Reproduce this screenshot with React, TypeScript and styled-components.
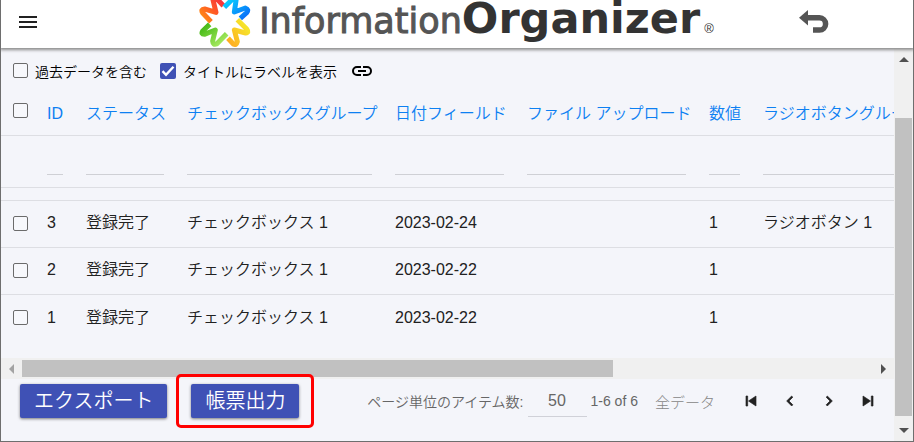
import React from "react";
import styled, { createGlobalStyle } from "styled-components";

const GlobalStyle = createGlobalStyle`
  * { box-sizing: border-box; }
  body {
    margin: 0;
    background: #f4f5fa;
    color: #212121;
    font-family: "Liberation Sans", "Noto Sans CJK JP", sans-serif;
    font-size: 16px;
    font-weight: 350;
  }
`;

const Page = styled.div`
  display: flex;
  flex-direction: column;
  height: 100vh;
  border: solid #6e6e6e;
  border-width: 0 1px 1px;
  overflow: hidden;
`;

const Header = styled.header`
  display: grid;
  grid-template-columns: 1fr auto 1fr;
  grid-template-rows: 44px;
  align-items: center;
  flex: none;
  height: 48px;
  padding: 0 84px 0 16px;
  background: #fff;
  box-shadow: 0 1px 3px 1px #8a8a8a;
  z-index: 1;
`;

const IconButton = styled.button`
  display: flex;
  align-items: center;
  justify-content: center;
  padding: 0;
  border: 0;
  background: none;
  color: #212121;
  cursor: pointer;
`;

const MenuButton = styled(IconButton)`
  justify-self: start;
`;

const BackButton = styled(IconButton)`
  justify-self: end;
`;

const Brand = styled.div`
  display: flex;
  align-items: center;
  align-self: start;
  gap: 8px;
  height: 47px;
  margin-left: 67px;
`;

const BrandName = styled.div`
  display: flex;
  align-items: baseline;
  font-family: "DejaVu Sans", sans-serif;
  font-weight: 400;
  line-height: 46px;
  white-space: nowrap;
`;

const Light = styled.span`
  color: #555;
  font-size: 35px;
  -webkit-text-stroke: 1px #555;
`;

const Heavy = styled.span`
  color: #333;
  font-size: 43px;
  font-weight: 700;
`;

const Registered = styled.span`
  margin-left: 4px;
  color: #333;
  font-family: "Liberation Sans", sans-serif;
  font-size: 13px;
`;

const Body = styled.div`
  display: flex;
  flex: 1;
  min-height: 0;
`;

const Main = styled.main`
  display: flex;
  flex-direction: column;
  flex: 1;
  min-width: 0;
`;

const Options = styled.div`
  display: flex;
  align-items: center;
  flex: none;
  gap: 13px;
  height: 42px;
  padding: 3px 12px 0;
  color: #000;
  font-size: 14px;
`;

const Option = styled.label`
  display: flex;
  align-items: center;
  gap: 7px;
  white-space: nowrap;
`;

const Check = styled.input`
  appearance: none;
  display: block;
  flex: none;
  width: 15px;
  height: 15px;
  margin: 0;
  border: 1px solid #6b6b6b;
  border-radius: 2px;
  background: #f7f8fc;

  &:checked {
    width: 16px;
    height: 16px;
    border: 0;
    background: #3f51b5;
  }
`;

const CheckHolder = styled.span`
  display: grid;
  & > * { grid-area: 1 / 1; }
  & > svg { pointer-events: none; }
`;

const TableArea = styled.div`
  flex: 1;
  min-height: 0;
  overflow: hidden;
`;

const Table = styled.table`
  width: 1051px;
  table-layout: fixed;
  border-collapse: separate;
  border-spacing: 0;
  white-space: nowrap;

  th, td {
    padding: 0 12px 0 11px;
    text-align: left;
    font-weight: inherit;
    line-height: 20px;
  }
  th:first-child, td:first-child { padding-left: 12px; }
`;

const Col = styled.col<{ $w: number }>`
  width: ${(p) => p.$w}px;
`;

const HeadRow = styled.tr`
  height: 46px;
  color: #0d80f2;
  th { padding-top: 3px; border-bottom: 1px solid #dddee3; }
  th:first-child { padding-top: 0; padding-bottom: 4px; }
`;

const FilterRow = styled.tr`
  height: 52px;
  td {
    border-bottom: 1px solid #dddee3;
    vertical-align: top;
  }
`;

const SpacerRow = styled.tr`
  height: 13px;
  td { border-bottom: 1px solid #dddee3; }
`;

const DataRow = styled.tr`
  height: 47px;
  &:not(:last-child) td { border-bottom: 1px solid #dddee3; }
  td { padding-bottom: 2px; }
`;

const FilterInput = styled.input`
  display: block;
  width: 100%;
  height: 39px;
  padding: 0;
  border: 0;
  border-bottom: 1px solid #cfd0d5;
  background: transparent;
  font: inherit;
  outline: 0;
`;

const VTrack = styled.div`
  display: flex;
  flex-direction: column;
  flex: none;
  align-items: center;
  width: 19px;
  padding: 9px 0 8px;
  background: #f0f0f0;
`;

const VThumb = styled.div`
  flex: 1;
  width: 17px;
  margin: 56px 0 12px;
  background: #c1c1c1;
`;

const HTrack = styled.div`
  display: flex;
  align-items: center;
  flex: none;
  height: 21px;
  padding: 0 8px;
  background: #f0f0f0;
`;

const HRail = styled.div`
  flex: 1;
  margin: 0 7px 0 8px;
`;

const HThumb = styled.div`
  width: 69.4%;
  height: 17px;
  background: #c1c1c1;
`;

const Footer = styled.footer`
  display: flex;
  align-items: center;
  flex: none;
  height: 62px;
  padding: 0 16px 18px 19px;
`;

const ActionButton = styled.button`
  flex: none;
  height: 34px;
  padding: 0 14px;
  border: 0;
  border-radius: 2px;
  background: #3f51b5;
  box-shadow: 0 1px 3px rgba(0, 0, 0, 0.5);
  color: #fff;
  font: inherit;
  font-size: 20px;
  line-height: 30px;
  white-space: nowrap;
  cursor: pointer;
`;

const Highlight = styled.div`
  flex: none;
  margin: 0 auto 0 9px;
  padding: 7px 12px;
  border: 3px solid #f00;
  border-radius: 5px;
`;

const Pager = styled.div`
  display: flex;
  align-items: center;
  flex: none;
  color: #666;
  font-size: 14px;
  white-space: nowrap;
`;

const PageSizeLabel = styled.label`
  display: flex;
  align-items: center;
  gap: 4px;
`;

const PageSize = styled.input`
  width: 59px;
  height: 32px;
  padding: 0;
  border: 0;
  border-bottom: 1px solid #d0d1d8;
  background: transparent;
  color: inherit;
  font: inherit;
  font-size: 16px;
  text-align: center;
`;

const Range = styled.span`
  margin: 0 17px 0 4px;
`;

const AllData = styled.button`
  margin-right: 26px;
  padding: 0;
  border: 0;
  background: none;
  color: #868686;
  font: inherit;
  font-weight: 300;
  font-size: 15px;
`;

const PagerButtons = styled.div`
  display: flex;
  gap: 19px;
`;

type CheckboxProps = { label?: string; checked?: boolean };

function Checkbox({ label, checked = false }: CheckboxProps) {
  return (
    <CheckHolder>
      <Check type="checkbox" defaultChecked={checked} aria-label={label} />
      {checked && (
        <svg width="16" height="16" viewBox="0 0 16 16" fill="none" stroke="#fff" strokeWidth="2.4">
          <path d="M2.5 8.2 6 11.8 13.5 3.8" />
        </svg>
      )}
    </CheckHolder>
  );
}

function Emblem() {
  return (
    <svg width="52" height="48" viewBox="0 0 156 144" aria-hidden="true">
      <defs>
        <linearGradient id="red" x1="1" y1="0" x2="0" y2="1">
          <stop offset="0.1" stopColor="#f5333f" />
          <stop offset="0.5" stopColor="#ff5a24" />
          <stop offset="1" stopColor="#ff9310" />
        </linearGradient>
        <linearGradient id="blue" x1="0" y1="0" x2="1" y2="1">
          <stop offset="0.1" stopColor="#09d2ff" />
          <stop offset="1" stopColor="#0868f8" />
        </linearGradient>
        <linearGradient id="green" x1="0" y1="0" x2="1" y2="1">
          <stop offset="0" stopColor="#3cb50f" />
          <stop offset="1" stopColor="#b4f06a" />
        </linearGradient>
        <linearGradient id="yellow" x1="1" y1="0" x2="0" y2="1">
          <stop offset="0.2" stopColor="#f6e32b" />
          <stop offset="1" stopColor="#ffa81f" />
        </linearGradient>
      </defs>
      <g fill="none" strokeWidth="15" strokeLinejoin="round">
        <path stroke="url(#red)" d="M36 65 L11 39 Q4 28 17 27 L51 37 L42 0 Q42 -10 52 -5 L73 17" />
        <path stroke="url(#blue)" d="M76 22 L103 -5 Q112 -8 111 2 L106 36 L139 24 Q151 28 143 38 L124 55" />
        <path stroke="url(#green)" d="M32 73 L11 93 Q5 103 16 103 L49 90 L41 123 Q42 136 53 132 L83 101" />
        <path stroke="url(#yellow)" d="M115 59 L143 87 Q151 98 140 99 L106 90 L115 125 Q112 137 103 132 L87 115" />
      </g>
    </svg>
  );
}

const columns = [
  { title: "ID", width: 39 },
  { title: "ステータス", width: 101 },
  { title: "チェックボックスグループ", width: 208 },
  { title: "日付フィールド", width: 132 },
  { title: "ファイル アップロード", width: 182 },
  { title: "数値", width: 54 },
  { title: "ラジオボタングループ", width: 300 },
];

const rows = [
  ["3", "登録完了", "チェックボックス 1", "2023-02-24", "", "1", "ラジオボタン 1"],
  ["2", "登録完了", "チェックボックス 1", "2023-02-22", "", "1", ""],
  ["1", "登録完了", "チェックボックス 1", "2023-02-22", "", "1", ""],
];

const pagerIcons = [
  { label: "最初のページ", d: "M6 6h2v12H6zM18 6v12l-9-6z" },
  { label: "前のページ", d: "M15.4 7.4 14 6l-6 6 6 6 1.4-1.4L10.8 12z" },
  { label: "次のページ", d: "M10 6 8.6 7.4l4.6 4.6-4.6 4.6L10 18l6-6z" },
  { label: "最後のページ", d: "M6 18l9-6-9-6zM16 6v12h2V6z" },
];

export default function App() {
  return (
    <>
      <GlobalStyle />
      <Page>
        <Header>
          <MenuButton aria-label="メニュー">
            <svg width="22" height="22" viewBox="0 0 22 22" stroke="currentColor" strokeWidth="2">
              <path d="M2 6h18M2 11h18M2 16h18" />
            </svg>
          </MenuButton>
          <Brand>
            <Emblem />
            <BrandName>
              <Light>Information</Light>
              <Heavy>Organizer</Heavy>
              <Registered>®</Registered>
            </BrandName>
          </Brand>
          <BackButton aria-label="戻る">
            <svg width="30" height="24" viewBox="0 0 30 24">
              <path fill="#555" d="M0 7.800 9 0v15.600z" />
              <path fill="none" stroke="#555" strokeWidth="5.500" d="M8 7.800h12.500a6 6 0 0 1 0 12.200H14" />
            </svg>
          </BackButton>
        </Header>
        <Body>
          <Main>
            <Options>
              <Option>
                <Checkbox />
                過去データを含む
              </Option>
              <Option>
                <Checkbox checked />
                タイトルにラベルを表示
              </Option>
              <IconButton aria-label="リンク">
                <svg width="24" height="24" viewBox="0 0 24 24" fill="none" stroke="#000" strokeWidth="2">
                  <path d="M11 8H7a4 4 0 0 0 0 8h4M13 8h4a4 4 0 0 1 0 8h-4M8 12h8" />
                </svg>
              </IconButton>
            </Options>
            <TableArea>
              <Table>
                <colgroup>
                  <Col $w={35} />
                  {columns.map((c) => (
                    <Col key={c.title} $w={c.width} />
                  ))}
                </colgroup>
                <thead>
                  <HeadRow>
                    <th>
                      <Checkbox label="すべて選択" />
                    </th>
                    {columns.map((c) => (
                      <th key={c.title} scope="col">
                        {c.title}
                      </th>
                    ))}
                  </HeadRow>
                  <FilterRow>
                    <td />
                    {columns.map((c) => (
                      <td key={c.title}>
                        <FilterInput aria-label={c.title} />
                      </td>
                    ))}
                  </FilterRow>
                  <SpacerRow>
                    <td colSpan={8} />
                  </SpacerRow>
                </thead>
                <tbody>
                  {rows.map((row) => (
                    <DataRow key={row[0]}>
                      <td>
                        <Checkbox label={`行 ${row[0]}`} />
                      </td>
                      {row.map((cell, i) => (
                        <td key={columns[i].title}>{cell}</td>
                      ))}
                    </DataRow>
                  ))}
                </tbody>
              </Table>
            </TableArea>
            <HTrack>
              <svg width="5" height="10" viewBox="0 0 5 10">
                <path fill="#a3a3a3" d="M5 0v10L0 5z" />
              </svg>
              <HRail>
                <HThumb />
              </HRail>
              <svg width="5" height="10" viewBox="0 0 5 10">
                <path fill="#505050" d="M0 0v10l5-5z" />
              </svg>
            </HTrack>
            <Footer>
              <ActionButton>エクスポート</ActionButton>
              <Highlight>
                <ActionButton>帳票出力</ActionButton>
              </Highlight>
              <Pager>
                <PageSizeLabel>
                  ページ単位のアイテム数:
                  <PageSize defaultValue="50" />
                </PageSizeLabel>
                <Range>1-6 of 6</Range>
                <AllData>全データ</AllData>
                <PagerButtons>
                  {pagerIcons.map((icon) => (
                    <IconButton key={icon.label} aria-label={icon.label}>
                      <svg width="20" height="20" viewBox="0 0 24 24" fill="currentColor" stroke="currentColor" strokeWidth="0.800">
                        <path d={icon.d} />
                      </svg>
                    </IconButton>
                  ))}
                </PagerButtons>
              </Pager>
            </Footer>
          </Main>
          <VTrack>
            <svg width="10" height="5" viewBox="0 0 10 5">
              <path fill="#505050" d="M0 5h10L5 0z" />
            </svg>
            <VThumb />
            <svg width="10" height="5" viewBox="0 0 10 5">
              <path fill="#505050" d="M0 0h10L5 5z" />
            </svg>
          </VTrack>
        </Body>
      </Page>
    </>
  );
}
